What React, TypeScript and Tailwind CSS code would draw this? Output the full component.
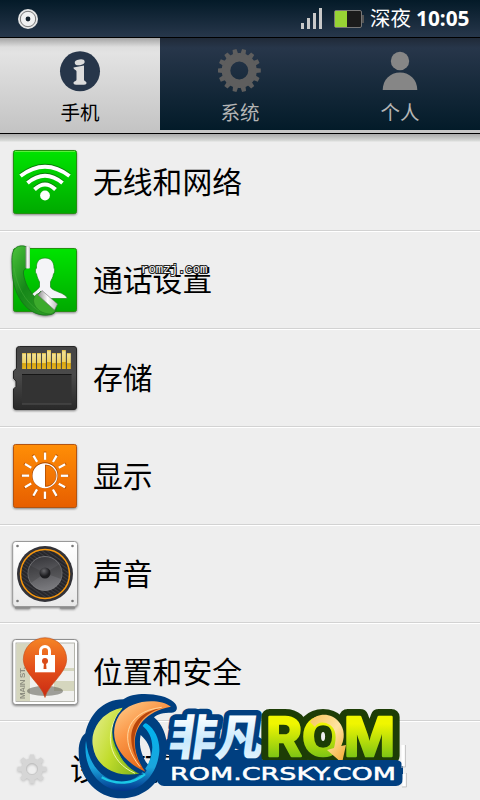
import type { ReactNode } from 'react'

const TEETH = (n: number) => Array.from({ length: n }, (_, i) => (i * 360) / n)

function IconBox({ children }: { children: ReactNode }) {
  return (
    <svg width="72" height="72" viewBox="0 0 72 72" className="shrink-0 overflow-visible drop-shadow-[0_1px_1px_rgba(0,0,0,0.45)]">
      {children}
    </svg>
  )
}

function WifiIcon() {
  return (
    <IconBox>
      <defs>
        <linearGradient id="green" x1="0" y1="0" x2="0" y2="1">
          <stop offset="0" stopColor="#00e400" />
          <stop offset="1" stopColor="#00a900" />
        </linearGradient>
      </defs>
      <rect x="4.5" y="4.5" width="63" height="63" rx="2" fill="url(#green)" stroke="#248f10" />
      <path d="M6 5.5H66" stroke="#5bee3c" />
      <g fill="none" strokeWidth="4">
        <g stroke="#087c08" transform="translate(0 -1)">
          <path d="M11.5 30Q36 11.5 60.5 30" />
          <path d="M18.5 37Q36 22.5 53.5 37" />
          <path d="M25.500 43.500Q36 33.500 46.500 43.500" />
        </g>
        <g stroke="#fff">
          <path d="M11.5 30Q36 11.5 60.5 30" />
          <path d="M18.5 37Q36 22.5 53.5 37" />
          <path d="M25.500 43.500Q36 33.500 46.500 43.500" />
        </g>
      </g>
      <circle cx="36" cy="49.500" r="4.900" fill="#fff" />
    </IconBox>
  )
}

function CallIcon() {
  return (
    <IconBox>
      <defs>
        <linearGradient id="handset" x1="0" y1="0" x2="1" y2="1">
          <stop offset="0" stopColor="#4dc43b" />
          <stop offset="0.450" stopColor="#168719" />
          <stop offset="1" stopColor="#31a326" />
        </linearGradient>
        <linearGradient id="metal" x1="0" y1="0" x2="1" y2="0">
          <stop offset="0" stopColor="#8b8b8b" />
          <stop offset="0.5" stopColor="#fff" />
          <stop offset="1" stopColor="#bbb" />
        </linearGradient>
      </defs>
      <rect x="4.5" y="4.5" width="63" height="63" rx="2" fill="url(#green)" stroke="#248f10" />
      <path d="M36 14C42 14 45 18 45 24C46 25 46 29 44.500 30C44 34 42 36 41.500 38V43C44 48 56 48 58.500 54.500H20C22 49 28 47 30.500 43V38C29 35 28 33 27.500 30C26 29 26 25 27.500 24C27 18 30 14 36 14Z" fill="#f4f4f7" stroke="#128a12" strokeWidth="0.700" />
      <path d="M8 3C12 1 16 2 17.500 3V24C15 25.500 14 27 14.500 30C16 39 20 47 26 53L32 47L46 62C48 66 47 69 42 70.500C31 73 20 68 13 58C5 47 3 35 3 20C2.500 10 4 5 8 3Z" fill="url(#handset)" stroke="#16711a" strokeWidth="0.800" />
      <path d="M5 24C8 42 15 57 30 67" fill="none" stroke="#53b544" strokeWidth="1" opacity="0.400" />
      <rect x="16.500" y="2.500" width="4.500" height="22" rx="1" fill="url(#metal)" />
      <path d="M24.500 57C25 51 28 49 31 50L45 63C47 66 46 68 42 70C34 70 26 66 24.500 57Z" fill="#3cab2c" stroke="#1f7a1a" strokeWidth="0.500" />
      <path d="M29 51L33 46.500L48.500 60L45.500 66Z" fill="url(#metal)" stroke="#777" strokeWidth="0.600" />
    </IconBox>
  )
}

// height of each gold pin on the card, left to right
const PINS = [16, 16, 16, 16, 16, 19, 16, 16, 19, 16]

function StorageIcon() {
  return (
    <IconBox>
      <defs>
        <linearGradient id="card" x1="0" y1="0" x2="0" y2="1">
          <stop offset="0" stopColor="#454545" />
          <stop offset="0.45" stopColor="#4a4a4a" />
          <stop offset="1" stopColor="#292929" />
        </linearGradient>
        <linearGradient id="gold" x1="0" y1="0" x2="0" y2="1">
          <stop offset="0" stopColor="#dcb52f" />
          <stop offset="0.1" stopColor="#f3e191" />
          <stop offset="0.62" stopColor="#efd263" />
          <stop offset="0.66" stopColor="#d9a50e" />
          <stop offset="1" stopColor="#e4b322" />
        </linearGradient>
      </defs>
      <path d="M10.500 4.500H65Q67.500 4.500 67.500 7V65Q67.500 67.500 65 67.500H7Q4.500 67.500 4.500 65V47L7 44.500V39L4.500 36.500V29L7.500 26.500V7Q7.500 4.500 10.500 4.500Z" fill="url(#card)" stroke="#252525" />
      <rect x="13" y="32" width="49.500" height="30" fill="#333" />
      <path d="M13 32.500H62.500" stroke="#161616" />
      <path d="M13 62H62.500" stroke="#505050" />
      {PINS.map((h, i) => (
        <rect key={i} x={13.1 + i * 4.98} y={27 - h} width="3.900" height={h} fill="url(#gold)" />
      ))}
    </IconBox>
  )
}

function DisplayIcon() {
  return (
    <IconBox>
      <defs>
        <linearGradient id="orange" x1="0" y1="0" x2="0" y2="1">
          <stop offset="0" stopColor="#ff8e06" />
          <stop offset="1" stopColor="#e75e00" />
        </linearGradient>
      </defs>
      <rect x="4.500" y="4.500" width="63" height="63" rx="2" fill="url(#orange)" stroke="#b35412" />
      {TEETH(12).map(a => (
        <g key={a} transform={`rotate(${a} 36 35.700)`}>
          <rect x="34.700" y="11.500" width="2.600" height="8" fill="#a64600" opacity="0.700" />
          <rect x="34.900" y="12.500" width="2.300" height="7.300" fill="#fff" />
        </g>
      ))}
      <circle cx="36" cy="35.300" r="12.300" fill="none" stroke="#a64600" strokeWidth="1.500" />
      <circle cx="36" cy="35.700" r="11.700" fill="none" stroke="#fff" strokeWidth="1.600" />
      <path d="M36 24A11.700 11.700 0 0 0 36 47.400Z" fill="#fff" />
      <path d="M36.500 25A10.700 10.700 0 0 1 36.500 46.400Z" fill="none" stroke="#a64600" strokeWidth="0.700" />
    </IconBox>
  )
}

function SoundIcon() {
  return (
    <IconBox>
      <defs>
        <pattern id="weave" width="3" height="3" patternUnits="userSpaceOnUse" patternTransform="rotate(35)">
          <rect width="3" height="3" fill="#242428" />
          <rect width="3" height="1.200" fill="#3b3b40" />
        </pattern>
        <linearGradient id="cone" x1="0" y1="0" x2="0.200" y2="1">
          <stop offset="0" stopColor="#333337" />
          <stop offset="1" stopColor="#77777b" />
        </linearGradient>
        <radialGradient id="dome" cx="0.400" cy="0.300">
          <stop offset="0" stopColor="#66666a" />
          <stop offset="1" stopColor="#1d1d20" />
        </radialGradient>
        <linearGradient id="panel" x1="0" y1="0" x2="0" y2="1">
          <stop offset="0" stopColor="#fff" />
          <stop offset="1" stopColor="#e9e9e9" />
        </linearGradient>
      </defs>
      <path d="M6 69.500H21M51 69.500H66" stroke="#8c8c8c" strokeWidth="2" />
      <rect x="3.700" y="3.500" width="64.800" height="65" rx="3" fill="url(#panel)" stroke="#989898" />
      <g fill="#777">
        <circle cx="8.500" cy="8" r="1.300" />
        <circle cx="63.500" cy="8" r="1.300" />
        <circle cx="8.500" cy="63" r="1.300" />
        <circle cx="63.500" cy="63" r="1.300" />
      </g>
      <circle cx="36" cy="36" r="28" fill="#323238" />
      <circle cx="36" cy="36" r="24.500" fill="url(#weave)" stroke="#f8980d" strokeWidth="1.500" />
      <circle cx="36" cy="35.500" r="17" fill="url(#cone)" stroke="#88888b" strokeWidth="0.700" />
      <path d="M36 35L21 27.500A17 17 0 0 0 22 45ZM36 35L51 26A17 17 0 0 1 52 41Z" fill="#1d1d20" opacity="0.200" />
      <circle cx="36" cy="35" r="5.500" fill="url(#dome)" />
    </IconBox>
  )
}

function LocationIcon() {
  return (
    <IconBox>
      <defs>
        <linearGradient id="pin" x1="0" y1="0" x2="0" y2="1">
          <stop offset="0" stopColor="#f58525" />
          <stop offset="0.500" stopColor="#e4501b" />
          <stop offset="1" stopColor="#c92a12" />
        </linearGradient>
      </defs>
      <rect x="3.700" y="3.500" width="65" height="65" rx="3" fill="#fff" stroke="#8f8f8f" />
      <rect x="7" y="7" width="58.500" height="58.500" fill="#f0f0ee" stroke="#a3a399" strokeWidth="0.800" />
      <path d="M7.500 7.500H21V65H7.500Z" fill="#d5d6be" />
      <path d="M45 45H65V55H45ZM45 32H65V35H45ZM21 7.500H27V18H21Z" fill="#d5d6be" />
      <text x="16" y="63" transform="rotate(-90 16 63)" fontSize="8" fontWeight="700" fill="#8d8d80" textLength="32" style={{ fontFamily: '"Liberation Sans", sans-serif' }}>MAIN ST.</text>
      <ellipse cx="36" cy="55" rx="18" ry="5" fill="#5b5b52" opacity="0.550" />
      <path d="M36 61.500C33 49 14.300 37 14.300 23.500A21.700 21.700 0 0 1 57.700 23.500C57.700 37 39 49 36 61.500Z" fill="url(#pin)" stroke="#c34918" strokeWidth="0.600" />
      <path d="M31.500 20V15A4.500 4.500 0 0 1 40.500 15V20" fill="none" stroke="#fff" strokeWidth="3" />
      <rect x="26" y="19" width="20" height="17.300" fill="#fff" />
      <circle cx="36" cy="25" r="3" fill="#d94b18" />
      <path d="M35 26H37L37.500 33H34.500Z" fill="#d94b18" />
    </IconBox>
  )
}

function InfoIcon() {
  return (
    <svg width="44" height="44" viewBox="0 0 44 44">
      <circle cx="22" cy="22.300" r="20" fill="#27364a" />
      <ellipse cx="21.700" cy="13.300" rx="5" ry="2.900" fill="#dcdcdc" transform="rotate(-8 21.700 13.300)" />
      <path d="M15.500 18.500L26 16.500V30.500C26 32.500 28.500 32 28.500 34C28.500 36 26 35.800 22 35.800C18 35.800 15.500 36 15.500 34C15.500 32 18.500 32.500 18.500 30.500V22.500C18.500 20.500 15.500 21 15.500 18.500Z" fill="#dcdcdc" />
    </svg>
  )
}

function GearIcon() {
  return (
    <svg width="44" height="44" viewBox="-21.300 -21.500 44 44" fill="#5e5e5e">
      <circle r="13.300" fill="none" stroke="#5e5e5e" strokeWidth="8.600" />
      {TEETH(14).map(a => (
        <path key={a} d="M-2.600 -16.500L-2 -21.500H2L2.600 -16.500Z" transform={`rotate(${a + 90})`} />
      ))}
    </svg>
  )
}

function PersonIcon() {
  return (
    <svg width="44" height="44" viewBox="0 0 44 44" fill="#868686">
      <circle cx="22" cy="12" r="9.200" />
      <path d="M4.700 41C4.700 31 12 23.500 22 23.500S39.300 31 39.300 41Z" />
    </svg>
  )
}

function SmallGear() {
  return (
    <svg width="32" height="32" viewBox="-16 -16 32 32" className="drop-shadow-[0_1px_1px_rgba(0,0,0,0.2)]">
      <circle r="8.200" fill="none" stroke="#d6d6d6" strokeWidth="5" />
      {TEETH(8).map(a => (
        <path key={a} d="M-2.600 -10L-2.200 -14.500H2.200L2.600 -10Z" fill="#d6d6d6" transform={`rotate(${a})`} />
      ))}
      <circle r="5.600" fill="none" stroke="#bbb" strokeWidth="0.600" />
    </svg>
  )
}

function Logo() {
  return (
    <svg width="350" height="110" viewBox="0 0 350 110" className="absolute left-[70px] top-[690px]">
      <defs>
        <linearGradient id="ring" x1="0" y1="0" x2="0" y2="1">
          <stop offset="0" stopColor="#00b4ef" />
          <stop offset="0.650" stopColor="#1ba5dc" />
          <stop offset="1" stopColor="#02348b" />
        </linearGradient>
        <linearGradient id="leaf" x1="0" y1="0.200" x2="1" y2="0.800">
          <stop offset="0" stopColor="#e3ed86" />
          <stop offset="0.500" stopColor="#c1dc2c" />
          <stop offset="1" stopColor="#82b51b" />
        </linearGradient>
        <linearGradient id="flame" x1="0" y1="0" x2="0.600" y2="1">
          <stop offset="0" stopColor="#ffd291" />
          <stop offset="0.450" stopColor="#fb9647" />
          <stop offset="1" stopColor="#e0600f" />
        </linearGradient>
        <linearGradient id="ice" x1="0" y1="0" x2="0" y2="1">
          <stop offset="0.200" stopColor="#fff" />
          <stop offset="0.600" stopColor="#c8e9fc" />
          <stop offset="1" stopColor="#f1faff" />
        </linearGradient>
        <linearGradient id="lime" x1="0" y1="0" x2="0" y2="1">
          <stop offset="0.300" stopColor="#f0f600" />
          <stop offset="0.900" stopColor="#6dbd17" />
        </linearGradient>
        <linearGradient id="amber" x1="0" y1="0" x2="1" y2="1">
          <stop offset="0" stopColor="#f6c55a" />
          <stop offset="0.500" stopColor="#ffe3a1" />
          <stop offset="1" stopColor="#f2a72c" />
        </linearGradient>
      </defs>

      <g transform="scale(0.3333)">
        <path fillRule="evenodd" d="M26 185C26 155 36 138 46 130C58 75 98 28 160 28C190 3 280 8 310 35C326 48 324 66 305 68C280 68 262 72 252 82C285 110 300 160 285 215C270 290 210 325 155 325C85 325 26 270 26 185ZM212 135C205 165 215 200 235 225C250 190 240 160 212 135Z" fill="#003f80" />
        <path d="M48 152C55 230 105 277 160 275C212 270 246 222 247 172C247 145 236 122 218 108Q224 96 232 102C255 118 270 150 268 185C262 250 220 300 160 303C95 303 36 240 48 152Z" fill="url(#ring)" />
        <path d="M95 262C140 287 190 282 225 252" fill="none" stroke="#1bc8e6" strokeWidth="7" />
        <path d="M162 50C90 62 60 120 66 165C75 230 130 268 214 252C150 225 105 140 162 50Z" fill="url(#leaf)" stroke="#003f80" strokeWidth="4" />
        <path d="M156 56C104 120 118 205 206 251C145 222 112 150 156 56Z" fill="#8cc21d" />
        <path d="M150 64C100 130 115 215 195 250" fill="none" stroke="#eef6a9" strokeWidth="3" />
        <path d="M303 50C265 22 180 30 148 75C112 132 138 205 226 245C176 180 175 75 303 50Z" fill="url(#flame)" stroke="#003f80" strokeWidth="10" paintOrder="stroke" />
        <path d="M280 53C170 68 160 160 221 240C176 180 178 78 280 53Z" fill="#b8450a" />
        <path d="M275 52C160 66 148 155 210 230" fill="none" stroke="#ffd7a0" strokeWidth="3" />
      </g>

      <path d="M99 60H190V76H99ZM103 30H128V66H103Z" fill="#003f80" />
      <text x="0" y="0" transform="translate(97 65) skewX(-8)" fontSize="48" fontWeight="900" textLength="95" fill="url(#ice)" stroke="#003f80" strokeWidth="11" strokeLinejoin="round" paintOrder="stroke" style={{ fontFamily: '"Noto Sans CJK SC", sans-serif' }}>非凡</text>

      <text x="196" y="65.500" fontSize="53" fontWeight="700" textLength="129" lengthAdjust="spacingAndGlyphs" fill="#1d3d06" stroke="#1d3d06" strokeWidth="16" strokeLinejoin="round" style={{ fontFamily: 'Inter, sans-serif' }} aria-hidden="true">ROM</text>
      <text x="196" y="65.500" fontSize="53" fontWeight="700" textLength="129" lengthAdjust="spacingAndGlyphs" fill="url(#lime)" stroke="url(#lime)" strokeWidth="2.500" strokeLinejoin="round" style={{ fontFamily: 'Inter, sans-serif' }}>ROM</text>
      <path d="M240 32C246 23 261 22 269 32C275 39 275 49 271 56L276 55L272 73L257 60L264 58C267 47 266 39 260 35C254 31 247 32 245 37Z" fill="url(#amber)" />

      <rect x="87" y="70" width="246" height="26" rx="7" fill="#003f80" />
      <text x="100" y="89.500" fontSize="18" textLength="226" lengthAdjust="spacingAndGlyphs" fill="#fff" stroke="#fff" strokeWidth="0.500" style={{ fontFamily: '"DejaVu Sans", sans-serif' }}>ROM.CRSKY.COM</text>
      <path d="M333 55V76M334 84V96" fill="none" stroke="#fff" strokeWidth="3" />
      <path d="M335.500 55V77H331M336.500 83V97H332" fill="none" stroke="#c8c8c8" />
    </svg>
  )
}

const ROWS = [
  { label: '无线和网络', icon: <WifiIcon /> },
  { label: '通话设置', icon: <CallIcon /> },
  { label: '存储', icon: <StorageIcon /> },
  { label: '显示', icon: <DisplayIcon /> },
  { label: '声音', icon: <SoundIcon /> },
  { label: '位置和安全', icon: <LocationIcon /> },
]

function StatusBar() {
  return (
    <div className="flex h-[38px] items-center border-b border-black bg-gradient-to-b from-[#041a28] to-[#27374b] pl-[17px] pr-[9px] text-white">
      <svg width="22" height="22" viewBox="0 0 22 22">
        <circle cx="11" cy="11" r="10" fill="#e6e6e6" />
        <circle cx="11" cy="11" r="7.700" fill="#f1f1f1" stroke="#6a6a6a" strokeWidth="0.900" />
        <circle cx="11" cy="11" r="2.400" fill="#14212c" />
      </svg>
      <div className="ml-auto flex h-[21px] items-end gap-[3px] pt-px">
        <i className="h-1.5 w-[3px] bg-[#c9c9c9]" />
        <i className="h-[11px] w-[3px] bg-[#c9c9c9]" />
        <i className="h-4 w-[3px] bg-[#c9c9c9]" />
        <i className="h-[21px] w-[3px] bg-[#c9c9c9]" />
      </div>
      <div className="ml-3 flex items-center">
        <div className="h-[18px] w-7 rounded-[2px] border border-[#777] bg-[#1b1b1b]">
          <div className="h-full w-3 bg-[#97d334]" />
        </div>
        <div className="h-2 w-0.5 bg-[#555]" />
      </div>
      <span className="ml-[6px] text-[20.500px] leading-none">深夜</span>
      <span className="ml-[5px] w-[55px] whitespace-nowrap text-[20.800px] font-bold leading-none">10:05</span>
    </div>
  )
}

export default function App() {
  return (
    <div className="relative h-[800px] w-[480px] overflow-hidden bg-[#eee] font-['Noto_Sans','Noto_Sans_CJK_SC',sans-serif] text-black">
      <StatusBar />

      <div className="flex h-[96px] border-b border-black bg-[#c6c6c6]">
        <div className="flex w-40 flex-col items-center bg-[linear-gradient(#a4a4a4,#dedede_9px,#e3e3e3_15px,#c3c3c3)] pt-[11px]">
          <InfoIcon />
          <span className="mt-[9px] text-[19.500px] leading-[22px]">手机</span>
        </div>
        <div className="flex h-[92px] w-40 flex-col items-center bg-[linear-gradient(#202a38,#27364a_10px,#031b29)] pt-[11px] text-[#b5b5b5]">
          <GearIcon />
          <span className="mt-[9px] text-[19.500px] leading-[22px]">系统</span>
        </div>
        <div className="flex h-[92px] w-40 flex-col items-center bg-[linear-gradient(#202a38,#27364a_10px,#031b29)] pt-[11px] text-[#b5b5b5]">
          <PersonIcon />
          <span className="mt-[9px] text-[19.500px] leading-[22px]">个人</span>
        </div>
      </div>

      <div className="bg-[linear-gradient(#aaa,#dadcda_7px,#eee_8px)]">
        {ROWS.map(row => (
          <div key={row.label} className="flex h-[98px] items-center border-b border-white pb-[2px] pl-[9px] shadow-[inset_0_-1px_0_#d2d2d2]">
            {row.icon}
            <span className="ml-3 text-[29.800px] leading-none">{row.label}</span>
          </div>
        ))}
        <div className="flex h-[98px] items-center pb-[4px] pl-4">
          <SmallGear />
          <span className="ml-[22px] text-[29.800px] leading-none">设备配置</span>
        </div>
      </div>

      <span className="absolute left-[141px] top-[264px] font-['Liberation_Mono',monospace] text-[12.300px] leading-[13px] text-white [-webkit-text-stroke:2px_#222] [paint-order:stroke]">romzj.com</span>
      <Logo />
    </div>
  )
}
